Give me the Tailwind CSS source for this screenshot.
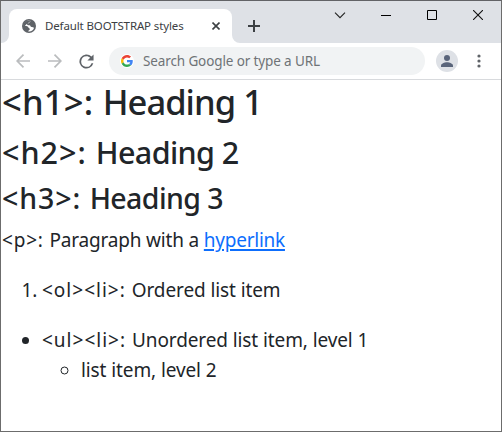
<!DOCTYPE html>
<html lang="en">
<head>
<meta charset="utf-8">
<title>Default BOOTSTRAP styles</title>
<script src="https://cdn.jsdelivr.net/npm/@tailwindcss/browser@4"></script>
</head>
<body class="h-[432px] w-[502px] overflow-hidden bg-white font-['Noto_Sans','Open_Sans',sans-serif]">
<div class="flex h-full w-full flex-col border border-[#6c6c6c] border-t-[#626366]">
  <header class="flex h-[42px] shrink-0 bg-[#dee1e6]">
    <div class="relative mt-2 ml-2 flex h-[34px] w-[223px] items-center rounded-t-lg bg-white">
      <svg class="absolute bottom-0 -left-2 size-2" viewBox="0 0 8 8"><path d="M8 0v8H0a8 8 0 0 0 8-8" fill="#fff"/></svg>
      <svg class="absolute -right-2 bottom-0 size-2" viewBox="0 0 8 8"><path d="M0 0v8h8a8 8 0 0 1-8-8" fill="#fff"/></svg>
      <svg class="ml-[13px] size-[14px] shrink-0" viewBox="0 0 14 14"><circle cx="7" cy="7" r="7" fill="#5f6368"/><path d="M8.200 1.700c.3 1.500-.5 1.700-1.500 1.900-.2 1.200-.6 1.500-1.700 1.500.2 1.200 1 1.200 2.600 1.200 1 .2.800 1.700 2 1.700.9 0 1.300.7 2.500.7A5.500 5.500 0 0 1 6.200 12.400c.1-1.300 1.500-.9 1.500-2.200 0-1.200-1.200-1-1.500-1.900-.5-1-1.700-1.200-2.800-1.200H1.500A5.500 5.500 0 0 1 2.600 4 5.500 5.500 0 0 1 8.200 1.700z" fill="#fff"/><path d="M8 1.500c.2 1.500-.6 1.700-1.500 1.900-.2 1.200-.6 1.500-1.700 1.500C4 5.900 3.200 6 3 7.300H1A6 6 0 0 1 8 1.500z" fill="#5f6368"/></svg>
      <span class="ml-[9px] text-[11.500px] leading-4 tracking-[-0.13px] whitespace-nowrap text-[#3c4043]">Default BOOTSTRAP styles</span>
      <svg class="absolute top-[13px] right-[12px] size-2" viewBox="0 0 8 8" stroke="#3c4043" stroke-width="1.600"><path d="M.5.5l7 7m0-7l-7 7"/></svg>
    </div>
    <svg class="mt-[19px] ml-[16px] size-3" viewBox="0 0 12 12" stroke="#3c4043" stroke-width="2"><path d="M6 0v12M0 6h12"/></svg>
    <div class="ml-auto flex h-[28px] items-center text-black">
      <svg class="mr-[35px] h-[7px] w-3" viewBox="0 0 12 7" fill="none" stroke="#222" stroke-width="1.100"><path d="M1 .7l5 5 5-5"/></svg>
      <svg class="mr-[36px] size-[10px]" viewBox="0 0 10 10" fill="currentColor"><path d="M0 5h10v1H0z"/></svg>
      <svg class="mr-[36px] size-[10px]" viewBox="0 0 10 10" fill="none" stroke="currentColor"><path d="M.5.5h9v9h-9z"/></svg>
      <svg class="mr-[18px] size-[10px]" viewBox="0 0 10 10" stroke="#111" stroke-width="1.100"><path d="M0 0l10 10M10 0L0 10"/></svg>
    </div>
  </header>
  <nav class="flex h-[37px] shrink-0 items-center border-b border-[#d8dadd] bg-white">
    <svg class="ml-[15px] h-[14px] w-[14px]" viewBox="0 0 14 14" fill="none" stroke="#babcbe" stroke-width="1.700"><path d="M14 7H1.200M7.500.7L1.200 7l6.300 6.300"/></svg>
    <svg class="ml-[18px] h-[14px] w-[14px]" viewBox="0 0 14 14" fill="none" stroke="#babcbe" stroke-width="1.700"><path d="M0 7h12.800M6.500.7L12.800 7l-6.300 6.300"/></svg>
    <svg class="ml-[17px] size-[15px]" viewBox="3.500 3.500 17 17" fill="#5f6368"><path d="M17.650 6.350A8 8 0 1 0 19.730 14h-2.080A6 6 0 1 1 12 6c1.660 0 3.140.69 4.220 1.780L13 11h7V4z"/></svg>
    <div class="ml-[15px] flex h-7 w-[316px] items-center rounded-full bg-[#f1f3f4]">
      <span class="ml-[11px] flex size-[14px] items-center justify-center rounded-full bg-white">
      <svg class="size-3 shrink-0" viewBox="0 0 48 48"><path fill="#EA4335" d="M24 9.500c3.540 0 6.710 1.220 9.210 3.600l6.850-6.850C35.900 2.380 30.470 0 24 0 14.620 0 6.510 5.380 2.560 13.220l7.980 6.190C12.430 13.720 17.740 9.500 24 9.500z"/><path fill="#4285F4" d="M46.980 24.550c0-1.570-.15-3.090-.38-4.550H24v9.020h12.940c-.58 2.960-2.260 5.480-4.780 7.180l7.730 6c4.510-4.180 7.090-10.360 7.090-17.650z"/><path fill="#FBBC05" d="M10.530 28.590A14.500 14.500 0 0 1 9.770 24c0-1.600.27-3.140.76-4.590l-7.980-6.190A23.900 23.900 0 0 0 0 24c0 3.870.92 7.540 2.560 10.780z"/><path fill="#34A853" d="M24 48c6.480 0 11.930-2.130 15.890-5.810l-7.730-6c-2.150 1.450-4.920 2.300-8.160 2.300-6.260 0-11.570-4.220-13.470-9.910l-7.980 6.190C6.510 42.620 14.620 48 24 48z"/></svg></span>
      <span class="ml-[9px] text-[13.500px] leading-5 tracking-[-0.12px] whitespace-nowrap text-[#6f7377]">Search Google or type a URL</span>
    </div>
    <span class="ml-[11px] flex size-[22px] items-center justify-center rounded-full bg-[#dee1e6]">
      <svg class="size-3" viewBox="0 0 12 12" fill="#59647a"><circle cx="6" cy="3" r="3"/><path d="M0 12v-1.500C0 8.500 3.500 7.200 6 7.200s6 1.300 6 3.300V12z"/></svg>
    </span>
    <svg class="ml-[19px] h-[14px] w-1" viewBox="0 0 4 14" fill="#5f6368"><circle cx="2" cy="2" r="1.600"/><circle cx="2" cy="7" r="1.600"/><circle cx="2" cy="12" r="1.600"/></svg>
  </nav>
  <main class="flex flex-1 flex-col items-start pt-px pl-px whitespace-nowrap text-[#212529]">
    <h1 class="mb-[10px] text-[34.500px] leading-[42px] font-medium tracking-[-0.95px]"><span class="tracking-[0.25px]">&lt;h1&gt;: </span>Heading 1</h1>
    <h2 class="mb-[10px] pt-px text-[30.500px] leading-[36px] font-medium tracking-[-0.6px]"><span class="tracking-[1px]">&lt;h2&gt;: </span>Heading 2</h2>
    <h3 class="mb-[10px] pt-px text-[28.500px] leading-[34px] font-medium tracking-[-0.6px]"><span class="tracking-[0.95px]">&lt;h3&gt;: </span>Heading 3</h3>
    <div class="text-[19px] leading-[30px] tracking-[-0.1px]">
      <p class="mb-5"><span class="tracking-[0.8px]">&lt;p&gt;: </span><span class="tracking-[-0.18px]">Paragraph with a </span><a href="#" class="tracking-[-0.25px] text-[#0d6efd] underline decoration-2 underline-offset-2">hyperlink</a></p>
      <ol class="mb-5 list-decimal pl-10"><li><span class="tracking-[1px]">&lt;ol&gt;&lt;li&gt;: </span>Ordered list item</li></ol>
      <ul class="list-disc pl-10">
        <li><span class="tracking-[1px]">&lt;ul&gt;&lt;li&gt;: </span>Unordered list item, level 1
          <ul class="list-[circle] pl-10"><li class="-ml-px">list item, level 2</li></ul>
        </li>
      </ul>
    </div>
  </main>
</div>
</body>
</html>
